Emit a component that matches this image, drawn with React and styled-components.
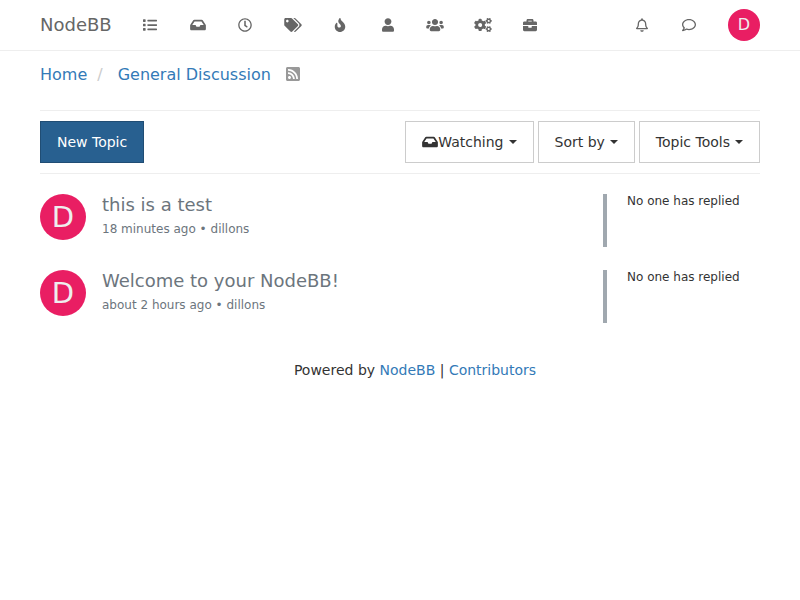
import React from "react";
import styled, { createGlobalStyle } from "styled-components";
import {
  FaList, FaInbox, FaRegClock, FaTags, FaFire, FaUser, FaUsers, FaCogs,
  FaBriefcase, FaRegBell, FaRegComment, FaRssSquare,
} from "react-icons/fa";

const GlobalStyle = createGlobalStyle`
  *, *::before, *::after { box-sizing: border-box; }
  body {
    margin: 0;
    background: #fff;
    color: #333;
    font: 14px/20px "DejaVu Sans", sans-serif;
  }
  a { color: #337ab7; text-decoration: none; }
  ul, ol { list-style: none; margin: 0; padding: 0; }
`;

const Navbar = styled.header`
  display: flex;
  align-items: center;
  height: 51px;
  padding: 0 40px;
  border-bottom: 1px solid #eee;
`;

const Brand = styled.a`
  margin-right: 15px;
  font-size: 18px;
  color: #666;
`;

const NavIcons = styled.ul`
  display: grid;
  grid-auto-flow: column;
  grid-auto-columns: 1fr;
  width: ${(p) => p.$width}px;
`;

const NavLink = styled.a`
  display: flex;
  align-items: center;
  justify-content: center;
  height: 50px;
  color: #666;

  svg { width: ${(p) => p.$icon}px; height: 14px; }
`;

const UserArea = styled.div`
  display: flex;
  align-items: center;
  gap: 16px;
  margin-left: auto;
`;

const Avatar = styled.a`
  display: flex;
  flex: none;
  align-items: center;
  justify-content: center;
  width: ${(p) => p.$size}px;
  height: ${(p) => p.$size}px;
  border-radius: 50%;
  background: #e91e63;
  color: #eee;
  font-size: ${(p) => p.$text}px;
`;

const Page = styled.main`
  padding: 14px 40px 0;
`;

const Breadcrumb = styled.ol`
  display: flex;
  align-items: center;
  height: 20px;
  margin-bottom: 25px;
  font-size: 16px;

  li { display: flex; align-items: flex-start; }
  li + li::before {
    content: "/";
    padding: 0 15px 0 10px;
    color: #ccc;
  }
`;

const FeedLink = styled.a`
  display: flex;
  align-items: center;
  height: 18px;
  margin-left: 14px;
  color: #999;

  svg { width: 16px; height: 16px; }
`;

const Toolbar = styled.div`
  display: flex;
  align-items: center;
  justify-content: space-between;
  padding: 10px 0;
  border: solid #eee;
  border-width: 1px 0;
`;

const ButtonGroup = styled.div`
  display: flex;
  gap: 4px;
`;

const Button = styled.button`
  display: flex;
  align-items: center;
  height: 42px;
  padding: 0 16px;
  border: 1px solid ${(p) => (p.$primary ? "#204d74" : "#ccc")};
  background: ${(p) => (p.$primary ? "#286090" : "#fff")};
  color: ${(p) => (p.$primary ? "#fff" : "#333")};
  font: inherit;

  svg { width: 16px; height: 14px; }
`;

const Caret = styled.span`
  margin-left: 5px;
  border-top: 4px solid;
  border-right: 4px solid transparent;
  border-left: 4px solid transparent;
`;

const TopicList = styled.ul`
  display: grid;
  gap: 23px;
  padding-top: 20px;
`;

const Topic = styled.li`
  display: flex;
  height: 53px;
`;

const TopicBody = styled.div`
  flex: 1;
  min-width: 0;
  padding-left: 16px;
`;

const TopicTitle = styled.h2`
  margin: 0;
  font-size: 18px;
  font-weight: 400;
  line-height: 22px;

  a { color: #6c757d; }
`;

const TopicMeta = styled.p`
  margin: 3px 0 0;
  color: #6c757d;
  font-size: 12px;

  a { color: inherit; }
`;

const Teaser = styled.div`
  width: 157px;
  padding-left: 20px;
  border-left: 4px solid #a0a8af;
  font-size: 12px;
  line-height: 14px;
`;

const Footer = styled.footer`
  margin-top: 37px;
  padding-left: 30px;
  text-align: center;
`;

const mainLinks = [
  ["Categories", FaList, 14], ["Unread", FaInbox, 16],
  ["Recent", FaRegClock, 14], ["Tags", FaTags, 18], ["Popular", FaFire, 12],
  ["Users", FaUser, 12], ["Groups", FaUsers, 18], ["Admin", FaCogs, 18],
  ["Moderation", FaBriefcase, 14],
];
const userLinks = [
  ["Notifications", FaRegBell, 12], ["Chats", FaRegComment, 14],
];
const topics = [
  { title: "this is a test", when: "18 minutes ago" },
  { title: "Welcome to your NodeBB!", when: "about 2 hours ago" },
];

function IconMenu({ links, width }) {
  return (
    <NavIcons $width={width}>
      {links.map(([label, Icon, size]) => (
        <li key={label}>
          <NavLink href="#" aria-label={label} $icon={size}><Icon /></NavLink>
        </li>
      ))}
    </NavIcons>
  );
}

export default function App() {
  return (
    <>
      <GlobalStyle />
      <Navbar>
        <Brand href="#">NodeBB</Brand>
        <IconMenu links={mainLinks} width={427} />
        <UserArea>
          <IconMenu links={userLinks} width={94} />
          <Avatar href="#" $size={32} $text={16}>D</Avatar>
        </UserArea>
      </Navbar>
      <Page>
        <Breadcrumb>
          <li><a href="#">Home</a></li>
          <li>
            <a href="#">General Discussion</a>
            <FeedLink href="#" aria-label="RSS feed"><FaRssSquare /></FeedLink>
          </li>
        </Breadcrumb>
        <Toolbar>
          <Button type="button" $primary>New Topic</Button>
          <ButtonGroup>
            <Button type="button"><FaInbox />Watching<Caret /></Button>
            <Button type="button">Sort by<Caret /></Button>
            <Button type="button">Topic Tools<Caret /></Button>
          </ButtonGroup>
        </Toolbar>
        <TopicList>
          {topics.map((t) => (
            <Topic key={t.title}>
              <Avatar href="#" $size={46} $text={29}>D</Avatar>
              <TopicBody>
                <TopicTitle><a href="#">{t.title}</a></TopicTitle>
                <TopicMeta>{t.when} • <a href="#">dillons</a></TopicMeta>
              </TopicBody>
              <Teaser>No one has replied</Teaser>
            </Topic>
          ))}
        </TopicList>
        <Footer>
          Powered by <a href="#">NodeBB</a> | <a href="#">Contributors</a>
        </Footer>
      </Page>
    </>
  );
}
